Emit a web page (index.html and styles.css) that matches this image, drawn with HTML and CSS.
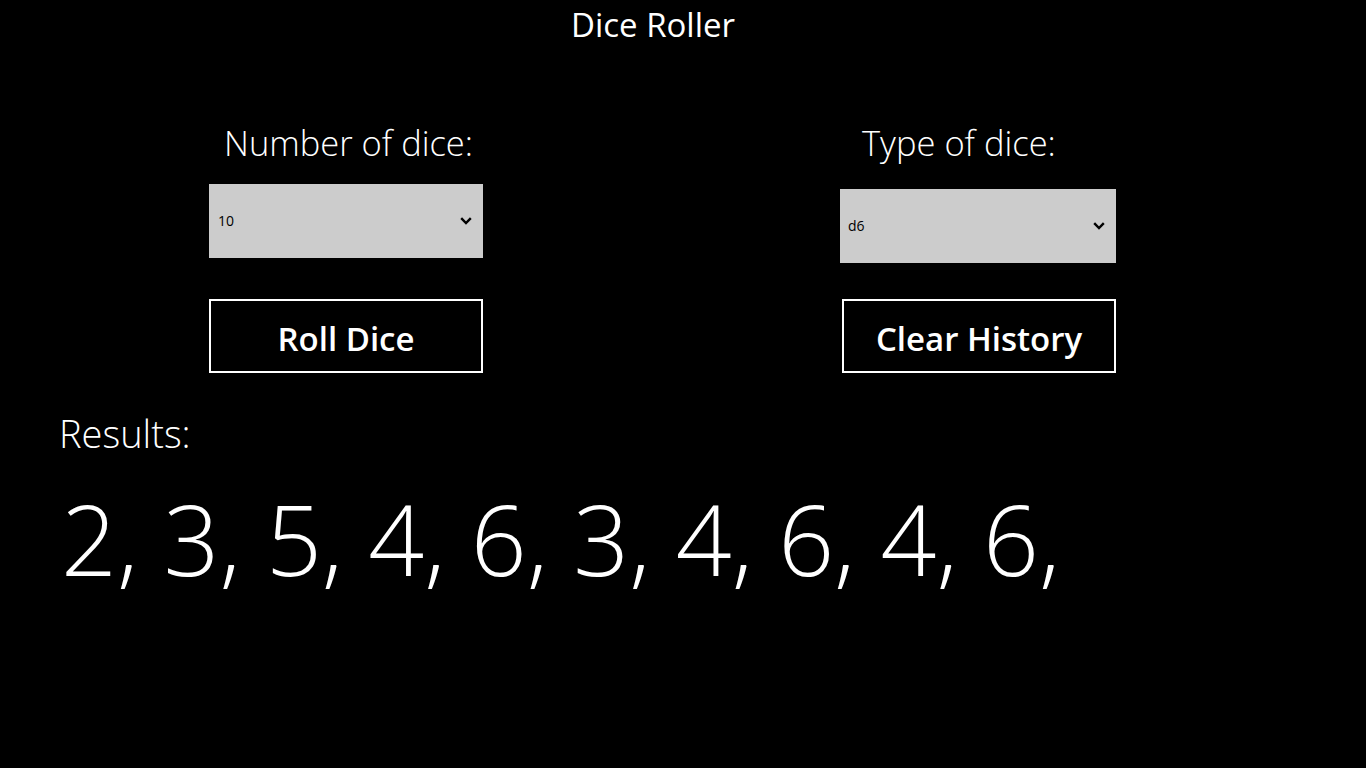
FILE: index.html
```html
<!DOCTYPE html>
<html lang="en">
<head>
<meta charset="utf-8">
<title>Dice Roller</title>
<link rel="stylesheet" href="styles.css">
</head>
<body>
<main class="app">
  <h1 class="title">Dice Roller</h1>
  <section class="controls">
    <div class="col col-left">
      <div class="label">Number of dice:</div>
      <div class="select">
        <span class="select-value">10</span>
        <svg class="chevron" width="12" height="8" viewBox="0 0 12 8"><path d="M1.2 1.2 L6 6 L10.8 1.2" fill="none" stroke="#000" stroke-width="2.4"/></svg>
      </div>
      <button class="btn">Roll Dice</button>
    </div>
    <div class="col col-right">
      <div class="label">Type of dice:</div>
      <div class="select">
        <span class="select-value">d6</span>
        <svg class="chevron" width="12" height="8" viewBox="0 0 12 8"><path d="M1.2 1.2 L6 6 L10.8 1.2" fill="none" stroke="#000" stroke-width="2.4"/></svg>
      </div>
      <button class="btn">Clear History</button>
    </div>
  </section>
  <section class="results">
    <div class="results-label">Results:</div>
    <div class="results-values">2, 3, 5, 4, 6, 3, 4, 6, 4, 6,</div>
  </section>
</main>
</body>
</html>
```

FILE: styles.css
```css
html, body {
  margin: 0;
  padding: 0;
  background: #000;
  height: 100%;
}

.app {
  font-family: "Open Sans", "Noto Sans", sans-serif;
  color: #fff;
  width: 1366px;
  height: 768px;
  overflow: hidden;
}

.title {
  margin: 0;
  padding-top: 5px;
  width: 1306px;
  text-align: center;
  font-size: 33px;
  font-weight: 400;
  line-height: 40px;
}

.controls {
  display: flex;
  margin-top: 76px;
}

.col {
  display: flex;
  flex-direction: column;
  align-items: flex-start;
}

.col-left {
  margin-left: 209px;
  width: 274px;
}

.col-right {
  margin-left: 357px;
  width: 276px;
}

.label {
  font-size: 34.5px;
  font-weight: 300;
  line-height: 44px;
  white-space: nowrap;
}

.col-left .label {
  margin-left: 15px;
}

.col-right .label {
  margin-left: 22px;
}

.select {
  box-sizing: border-box;
  height: 74px;
  width: 100%;
  background: #cccccc;
  color: #000;
  display: flex;
  align-items: center;
  justify-content: space-between;
  padding: 0 11px 0 9px;
}

.col-left .select {
  margin-top: 19px;
}

.col-right .select {
  margin-top: 24px;
  padding-left: 8px;
}

.select-value {
  font-size: 14px;
  line-height: 20px;
}

.chevron {
  display: block;
}

.btn {
  box-sizing: border-box;
  width: 274px;
  height: 74px;
  background: #000;
  color: #fff;
  border: 2px solid #fff;
  font-family: inherit;
  font-size: 33px;
  font-weight: 600;
  padding: 4px 0 0;
  cursor: pointer;
}

.col-left .btn {
  margin-top: 41px;
}

.col-right .btn {
  margin-top: 36px;
  margin-left: 2px;
}

.results {
  padding-left: 61px;
  margin-top: 36px;
}

.results-label {
  margin-left: -2px;
  font-size: 38px;
  font-weight: 300;
  line-height: 48px;
}

.results-values {
  margin-top: 21px;
  font-size: 98px;
  font-weight: 300;
  line-height: 120px;
  white-space: nowrap;
}
```
